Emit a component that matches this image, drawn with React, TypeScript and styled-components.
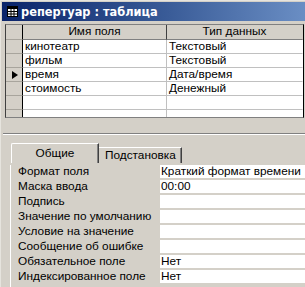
import React from "react";
import styled, { createGlobalStyle } from "styled-components";

const Global = createGlobalStyle`
  html, body { margin: 0; padding: 0; background: #d4d0c8; }
  * { box-sizing: border-box; }
`;

const Window = styled.div`
  width: 305px;
  height: 287px;
  overflow: hidden;
  background: #d4d0c8;
  display: flex;
  flex-direction: column;
  font-family: "Liberation Sans", Arial, sans-serif;
  font-size: 11.8px;
  color: #000;
  border-top: 1px solid #e6e4de;
  border-left: 1px solid #e6e4de;
`;

const TitleBar = styled.div`
  margin: 1px 0 0 1px;
  height: 19px;
  flex: none;
  display: flex;
  align-items: center;
  gap: 3px;
  padding-left: 5px;
  background: linear-gradient(to right, #0a246a 0%, #3a5c98 55%, #6a8ec4 100%);
  color: #fff;
  font-family: "DejaVu Sans", "Liberation Sans", sans-serif;
  font-weight: bold;
  font-size: 11.4px;
  white-space: nowrap;
`;

const GridFrame = styled.div`
  margin: 3px 1px 0 4px;
  height: 94px;
  flex: none;
  overflow: hidden;
  background: #fff;
  border-top: 1px solid #808080;
  border-left: 1px solid #404040;
  border-right: 1px solid #000;
  border-bottom: 1px solid #808080;
`;

const Row = styled.div<{ $header?: boolean }>`
  display: grid;
  grid-template-columns: 17px 144px 1fr;
  height: ${(p) => (p.$header ? 15 : 14)}px;
`;

const Selector = styled.div`
  background: #d4d0c8;
  border-right: 1px solid #000;
  border-bottom: 1px solid #a8a59d;
  display: flex;
  align-items: center;
  padding-left: 6px;
`;

const HeadCell = styled.div<{ $last?: boolean }>`
  background: #d4d0c8;
  border-right: 1px solid ${(p) => (p.$last ? "#d4d0c8" : "#404040")};
  border-bottom: 1px solid #808080;
  display: flex;
  align-items: center;
  justify-content: center;
  line-height: 1;
`;

const Cell = styled.div<{ $last?: boolean }>`
  background: #fff;
  border-right: 1px solid ${(p) => (p.$last ? "#fff" : "#c0c0c0")};
  border-bottom: 1px solid #c0c0c0;
  display: flex;
  align-items: center;
  padding-left: 2px;
  line-height: 1;
  white-space: nowrap;
`;

const Pointer = styled.div`
  width: 0;
  height: 0;
  border-top: 4.5px solid transparent;
  border-bottom: 4.5px solid transparent;
  border-left: 6px solid #000;
`;

const Splitter = styled.div`
  flex: none;
  margin: 15px 0 0 2px;
  border-top: 1px solid #808080;
  border-bottom: 1px solid #fff;
`;

const TabRow = styled.div`
  flex: none;
  margin-top: 8px;
  height: 20px;
  display: flex;
  align-items: flex-end;
  padding-left: 10px;
`;

const Tab = styled.div<{ $active?: boolean }>`
  width: ${(p) => (p.$active ? 88 : 83)}px;
  height: ${(p) => (p.$active ? 20 : 16)}px;
  background: #d4d0c8;
  border-top: 1px solid #fff;
  border-left: ${(p) => (p.$active ? "1px solid #fff" : "none")};
  border-right: 1px solid #404040;
  box-shadow: inset -1px 0 0 #808080;
  border-top-left-radius: ${(p) => (p.$active ? 2 : 0)}px;
  display: flex;
  align-items: center;
  justify-content: ${(p) => (p.$active ? "center" : "flex-start")};
  padding-left: ${(p) => (p.$active ? 0 : 6)}px;
  line-height: 1;
  white-space: nowrap;
`;

const Panel = styled.div`
  flex: 1;
  margin: 2px 0 0 9px;
  border-left: 1px solid #fff;
  display: flex;
  flex-direction: column;
  gap: 2px;
`;

const PropRow = styled.div`
  display: grid;
  grid-template-columns: 149px 1fr;
  height: 13px;
`;

const PropLabel = styled.div`
  padding-left: 7px;
  display: flex;
  align-items: center;
  line-height: 1;
  white-space: nowrap;
`;

const PropValue = styled.div`
  background: #fff;
  padding-left: 1px;
  display: flex;
  align-items: center;
  line-height: 1;
  white-space: nowrap;
`;

const TableIcon = () => (
  <svg width="11" height="11" viewBox="0 0 11 11">
    <rect x="0.5" y="0.5" width="10" height="10" fill="#fff" stroke="#000" />
    <rect x="1" y="1" width="9" height="2" fill="#000" />
    <line x1="4" y1="1" x2="4" y2="10" stroke="#000" />
    <line x1="7" y1="1" x2="7" y2="10" stroke="#000" />
    <line x1="1" y1="5.5" x2="10" y2="5.5" stroke="#000" />
    <line x1="1" y1="8" x2="10" y2="8" stroke="#000" />
  </svg>
);

const fields = [
  { name: "кинотеатр", type: "Текстовый" },
  { name: "фильм", type: "Текстовый" },
  { name: "время", type: "Дата/время", current: true },
  { name: "стоимость", type: "Денежный" },
  { name: "", type: "" },
  { name: "", type: "" },
];

const props = [
  ["Формат поля", "Краткий формат времени"],
  ["Маска ввода", "00:00"],
  ["Подпись", ""],
  ["Значение по умолчанию", ""],
  ["Условие на значение", ""],
  ["Сообщение об ошибке", ""],
  ["Обязательное поле", "Нет"],
  ["Индексированное поле", "Нет"],
];

export default function App() {
  return (
    <>
      <Global />
      <Window>
        <TitleBar>
          <TableIcon />
          <span>репертуар : таблица</span>
        </TitleBar>
        <GridFrame>
          <Row $header>
            <Selector />
            <HeadCell>Имя поля</HeadCell>
            <HeadCell $last>Тип данных</HeadCell>
          </Row>
          {fields.map((f, i) => (
            <Row key={i}>
              <Selector>{f.current && <Pointer />}</Selector>
              <Cell>{f.name}</Cell>
              <Cell $last>{f.type}</Cell>
            </Row>
          ))}
        </GridFrame>
        <Splitter />
        <TabRow>
          <Tab $active>Общие</Tab>
          <Tab>Подстановка</Tab>
        </TabRow>
        <Panel>
          {props.map(([l, v]) => (
            <PropRow key={l}>
              <PropLabel>{l}</PropLabel>
              <PropValue>{v}</PropValue>
            </PropRow>
          ))}
        </Panel>
      </Window>
    </>
  );
}
